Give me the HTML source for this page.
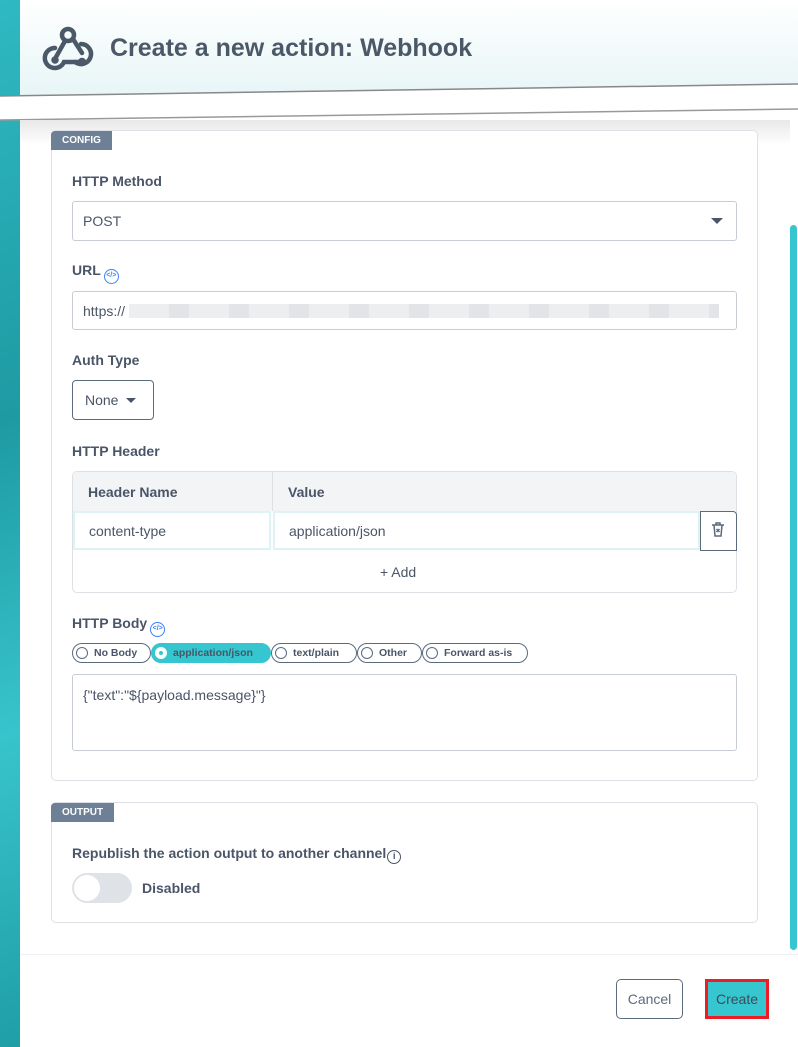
<!DOCTYPE html>
<html><head><meta charset="utf-8"><style>
*{box-sizing:border-box;margin:0;padding:0}
body{width:798px;height:1047px;overflow:hidden;background:#fff;font-family:"Liberation Sans",sans-serif;color:#4a5568;position:relative}
.strip{position:absolute;left:0;top:0;width:20px;height:1047px;background:linear-gradient(160deg,#2fb9c2,#1e9aa3 40%,#38c4cc 70%,#1f9ea6)}
.hdr{position:absolute;left:20px;top:0;width:778px;height:100px;background:linear-gradient(180deg,#fff,#e6f5f6)}
.title{position:absolute;left:110px;top:34px;font-size:25px;font-weight:bold;color:#4a5868}
.lbl{position:absolute;left:72px;font-size:14px;font-weight:bold;color:#4a5568}
.card{position:absolute;left:51px;border:1px solid #dde1e6;border-radius:5px;background:#fff}
.tag{position:absolute;left:51px;background:#6e8096;color:#fff;font-size:10px;font-weight:bold;padding:4px 11px;border-radius:4px 0 0 0}
.inp{position:absolute;left:72px;width:665px;border:1px solid #c7ccd3;border-radius:3px;font-size:14px;color:#4a5568;padding-left:10px;display:flex;align-items:center}
.pill{display:inline-flex;align-items:center;border:1.5px solid #5b6b7e;border-radius:10px;height:20px;padding:0 8px 0 3px;font-size:10.5px;font-weight:bold;color:#4a5568}
.pill i{width:12px;height:12px;border:1.5px solid #5b6b7e;border-radius:50%;margin-right:6px;display:inline-block}
.btn{position:absolute;top:979px;height:40px;border-radius:5px;font-size:14px;display:flex;align-items:center;justify-content:center}
.code{display:inline-block;width:15px;height:15px;border:1.5px solid #3b82f6;border-radius:50%;vertical-align:-2px;font-size:7px;color:#3b82f6;text-align:center;line-height:12px;margin-left:3px}
</style></head><body>
<div class="strip"></div>
<div class="hdr"></div>
<svg style="position:absolute;left:0;top:0" width="798" height="130">
<polygon points="0,96 798,84 798,109 0,120" fill="#fff"/>
<line x1="0" y1="96" x2="798" y2="84" stroke="#888" stroke-width="1.5"/>
<line x1="0" y1="120" x2="798" y2="109" stroke="#999" stroke-width="1.5"/>
</svg>
<svg style="position:absolute;left:42px;top:24px" width="52" height="48" viewBox="0 0 52 48" fill="none" stroke="#4a5868" stroke-width="4.5" stroke-linecap="round">
<circle cx="26" cy="11" r="6"/>
<path d="M23 17 L14 33"/>
<path d="M13 24 A10 10 0 1 0 22 38 L40 38"/>
<circle cx="13" cy="36" r="1.5" fill="#4a5868"/>
<path d="M31 15 L40 29"/>
<path d="M33 38 A10 10 0 1 0 39 20" />
<circle cx="40" cy="38" r="2" fill="#4a5868"/>
</svg>
<div style="position:absolute;left:20px;top:120px;width:770px;height:25px;background:linear-gradient(#e8e8e8,#fff)"></div>
<div class="title">Create a new action: Webhook</div>
<div style="position:absolute;left:790px;top:225px;width:7px;height:725px;background:#35c6cf;border-radius:4px"></div>

<div class="card" style="top:130px;width:707px;height:651px"></div>
<div class="tag" style="top:131px">CONFIG</div>
<div class="lbl" style="top:173px">HTTP Method</div>
<div class="inp" style="top:201px;height:40px">POST<span style="position:absolute;right:13px;top:16px;border:6px solid transparent;border-top:6px solid #4a5568"></span></div>
<div class="lbl" style="top:262px">URL<span class="code">&lt;/&gt;</span></div>
<div class="inp" style="top:291px;height:39px">https://<span style="display:inline-block;width:590px;height:14px;margin-left:4px;background:repeating-linear-gradient(90deg,#eceef0 0 40px,#e2e4e7 40px 60px)"></span></div>
<div class="lbl" style="top:352px">Auth Type</div>
<div style="position:absolute;left:72px;top:380px;width:82px;height:40px;border:1.5px solid #5b6b7e;border-radius:4px;font-size:14px;padding:11px 12px">None <span style="display:inline-block;border:5px solid transparent;border-top:5px solid #4a5568;vertical-align:-3px;margin-left:4px"></span></div>
<div class="lbl" style="top:443px">HTTP Header</div>
<div style="position:absolute;left:72px;top:471px;width:665px;height:122px;border:1px solid #dde1e6;border-radius:5px"></div>
<div style="position:absolute;left:73px;top:472px;width:663px;height:39px;background:#f3f4f6;border-radius:5px 5px 0 0"></div>
<div style="position:absolute;left:272px;top:472px;width:1px;height:39px;background:#dde1e6"></div>
<div class="lbl" style="top:484px;left:88px">Header Name</div>
<div class="lbl" style="top:484px;left:288px">Value</div>
<div style="position:absolute;left:73px;top:511px;width:198px;height:39px;border:2px solid #dff3f5;font-size:14px;padding:10px 14px">content-type</div>
<div style="position:absolute;left:273px;top:511px;width:427px;height:39px;border:2px solid #dff3f5;font-size:14px;padding:10px 14px">application/json</div>
<div style="position:absolute;left:700px;top:511px;width:37px;height:40px;border:1.5px solid #5b6b7e;border-radius:0 4px 0 0"></div>
<svg style="position:absolute;left:711px;top:522px" width="14" height="16" viewBox="0 0 14 16" fill="none" stroke="#5b6b7e" stroke-width="1.5"><path d="M1 3h12M5 3V1h4v2M3 3l1 11h6l1-11M5.5 7l3 3M8.5 7l-3 3"/></svg>
<div style="position:absolute;left:380px;top:564px;font-size:14px;color:#4a5568">+ Add</div>
<div class="lbl" style="top:615px">HTTP Body<span class="code">&lt;/&gt;</span></div>
<div style="position:absolute;left:72px;top:643px;display:flex">
<span class="pill" style="width:79px"><i></i>No Body</span><span class="pill" style="background:#35c6cf;border-color:#35c6cf;width:120px"><i style="background:#fff;border-color:#fff;box-shadow:inset 0 0 0 3px #fff,inset 0 0 0 6px #35c6cf"></i>application/json</span><span class="pill" style="width:86px"><i></i>text/plain</span><span class="pill" style="width:65px"><i></i>Other</span><span class="pill" style="width:106px"><i></i>Forward as-is</span>
</div>
<div style="position:absolute;left:72px;top:674px;width:665px;height:77px;border:1px solid #c7ccd3;border-radius:3px;font-size:14px;padding:12px 10px">{"text":"${payload.message}"}</div>

<div class="card" style="top:802px;width:707px;height:121px"></div>
<div class="tag" style="top:803px">OUTPUT</div>
<div class="lbl" style="top:845px">Republish the action output to another channel<span style="display:inline-block;width:14px;height:14px;border:1.5px solid #4a5568;border-radius:50%;font-size:9px;text-align:center;line-height:11px;vertical-align:-1px;margin-left:1px">i</span></div>
<div style="position:absolute;left:72px;top:873px;width:60px;height:30px;border-radius:15px;background:#dfe2e6"></div>
<div style="position:absolute;left:74px;top:875px;width:26px;height:26px;border-radius:50%;background:#fff"></div>
<div class="lbl" style="top:880px;left:142px">Disabled</div>

<div style="position:absolute;left:20px;top:954px;width:778px;height:1px;background:#eef0f2"></div>
<div class="btn" style="left:616px;width:67px;border:1.5px solid #5b6b7e;color:#5b6b7e">Cancel</div>
<div class="btn" style="left:705px;width:64px;background:#35c6cf;border:3px solid #ee1c24;border-radius:0;color:#3d4b5a">Create</div>
</body></html>
